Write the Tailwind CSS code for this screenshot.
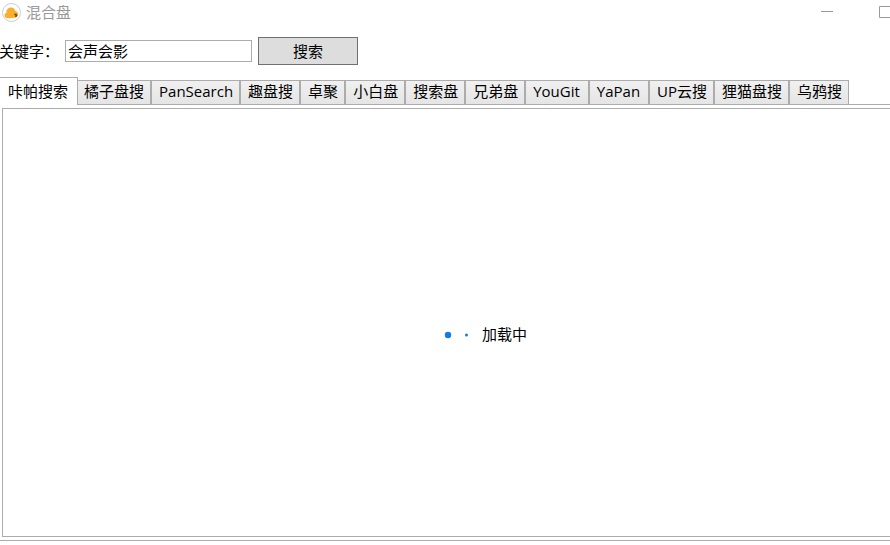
<!DOCTYPE html>
<html lang="zh-CN">
<head>
    <meta charset="UTF-8">
    <meta name="viewport" content="width=device-width, initial-scale=1.0">
    <title>混合盘</title>
    <script src="https://cdn.jsdelivr.net/npm/@tailwindcss/browser@4"></script>
</head>
<body class="h-screen flex flex-col overflow-hidden bg-white pb-1 text-[15px] leading-5 text-black font-['Open_Sans','Noto_Sans_CJK_SC',sans-serif]">
    <!-- 标题栏 -->
    <header class="flex h-6 shrink-0 items-center justify-between">
        <div class="flex items-center gap-[5px] pl-px">
            <svg class="size-5" viewBox="0 0 20 20" aria-hidden="true">
                <circle cx="10.5" cy="10.5" r="9" fill="#fff" stroke="#c3c6ce" stroke-width="0.9" />
                <path d="M4 15C3 13.2 3.8 11.2 5.6 10.6C5.2 7.6 7.2 5.4 9.8 5.4C12.4 5.4 14 7 14.3 9C16.4 9.4 17.4 11 17.1 12.8C16.8 14.8 15.2 16 13.2 15.8C10.2 16.4 7.2 16.4 5.4 15.9C4.8 15.8 4.3 15.5 4 15Z" fill="#fbae2b" />
                <path d="M13.6 11.6L15.4 11.8L16.4 13L15.8 14.8L13.8 15.2L14.6 13.8L13.4 13Z" fill="#6b4a20" />
            </svg>
            <h1 class="text-[#999999]">混合盘</h1>
        </div>
        <div class="-mr-6 flex items-center text-[#999999]">
            <button type="button" aria-label="最小化" class="flex h-6 w-[58px] items-center justify-center">
                <svg class="h-3 w-3" viewBox="0 0 12 12"><path d="M0 5.5H12" stroke="currentColor" /></svg>
            </button>
            <button type="button" aria-label="最大化" class="flex h-6 w-[58px] items-center justify-center">
                <svg class="h-3 w-3" viewBox="0 0 12 12"><path d="M0.5 0.5H11.5V11.5H0.5Z" fill="none" stroke="currentColor" /></svg>
            </button>
        </div>
    </header>

    <!-- 搜索栏 -->
    <form class="flex shrink-0 items-center pt-[13px] pb-3" onsubmit="return false">
        <label for="keyword" class="-ml-px w-[66px] shrink-0">关键字：</label>
        <input type="text" id="keyword" value="会声会影" class="h-[22px] w-[187px] border border-[#abadb3] bg-white px-[2px] pb-0.5 focus:outline-none">
        <button type="submit" class="ml-1.5 h-7 w-[100px] border border-[#707070] bg-[#dddddd]">搜索</button>
    </form>

    <!-- 标签页 -->
    <div role="tablist" class="relative z-10 -mb-px flex shrink-0 items-end whitespace-nowrap">
        <button type="button" role="tab" aria-selected="true" class="relative z-10 -mr-0.5 h-7 border-t border-r border-[#acacac] bg-white pl-2 pr-[9px] pb-0.5">咔帕搜索</button>
        <button type="button" role="tab" class="h-[25px] border border-[#acacac] bg-linear-to-b from-[#f0f0f0] to-[#e5e5e5] pl-[7px] pr-1.5 pb-1">橘子盘搜</button>
        <button type="button" role="tab" class="h-[25px] border border-[#acacac] bg-linear-to-b from-[#f0f0f0] to-[#e5e5e5] pl-[7px] pr-1.5 pb-1">PanSearch</button>
        <button type="button" role="tab" class="h-[25px] border border-[#acacac] bg-linear-to-b from-[#f0f0f0] to-[#e5e5e5] pl-[7px] pr-1.5 pb-1">趣盘搜</button>
        <button type="button" role="tab" class="h-[25px] border border-[#acacac] bg-linear-to-b from-[#f0f0f0] to-[#e5e5e5] pl-[7px] pr-1.5 pb-1">卓聚</button>
        <button type="button" role="tab" class="h-[25px] border border-[#acacac] bg-linear-to-b from-[#f0f0f0] to-[#e5e5e5] pl-[7px] pr-1.5 pb-1">小白盘</button>
        <button type="button" role="tab" class="h-[25px] border border-[#acacac] bg-linear-to-b from-[#f0f0f0] to-[#e5e5e5] pl-[7px] pr-1.5 pb-1">搜索盘</button>
        <button type="button" role="tab" class="h-[25px] border border-[#acacac] bg-linear-to-b from-[#f0f0f0] to-[#e5e5e5] pl-[7px] pr-1.5 pb-1">兄弟盘</button>
        <button type="button" role="tab" class="h-[25px] border border-[#acacac] bg-linear-to-b from-[#f0f0f0] to-[#e5e5e5] pl-[7px] pr-2 pb-1">YouGit</button>
        <button type="button" role="tab" class="h-[25px] border border-[#acacac] bg-linear-to-b from-[#f0f0f0] to-[#e5e5e5] pl-[7px] pr-2 pb-1">YaPan</button>
        <button type="button" role="tab" class="h-[25px] border border-[#acacac] bg-linear-to-b from-[#f0f0f0] to-[#e5e5e5] pl-[7px] pr-1.5 pb-1">UP云搜</button>
        <button type="button" role="tab" class="h-[25px] border border-[#acacac] bg-linear-to-b from-[#f0f0f0] to-[#e5e5e5] pl-[7px] pr-1.5 pb-1">狸猫盘搜</button>
        <button type="button" role="tab" class="h-[25px] border border-[#acacac] bg-linear-to-b from-[#f0f0f0] to-[#e5e5e5] pl-[7px] pr-1.5 pb-1">乌鸦搜</button>
    </div>

    <!-- 搜索结果 -->
    <main role="tabpanel" class="flex flex-1 flex-col border-y border-[#acacac] pt-[3px] pb-[3px] pl-0.5">
        <div class="flex flex-1 items-center justify-center border-y border-l border-[#acacac] pt-6 pl-[78px]">
            <svg class="mr-3.5 h-2 w-6" viewBox="0 0 24 8" fill="#0f7be6" aria-hidden="true">
                <circle cx="4" cy="4" r="3.2" />
                <circle cx="22.5" cy="4" r="1.5" />
            </svg>
            <p class="pb-0.5">加载中</p>
        </div>
    </main>
</body>
</html>
